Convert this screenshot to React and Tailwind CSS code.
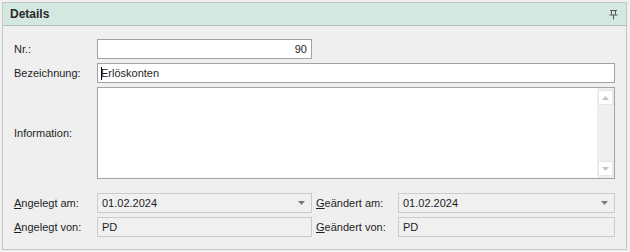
const Label = ({ children, className = '' }) => (
  <div className={`flex items-center text-[11px] text-[#1e1e1e] ${className}`}>{children}</div>
);

const ComboBox = ({ value }) => (
  <div className="flex h-[20px] items-center justify-between border border-[#cbcbcb] bg-[#f0f0f0] pl-[4px] pr-[6px] text-[11px] text-[#1e1e1e]">
    <span>{value}</span>
    <svg width="7" height="4" viewBox="0 0 7 4">
      <path d="M0 0h7L3.5 4z" fill="#7a7a7a" />
    </svg>
  </div>
);

const ReadOnlyBox = ({ value }) => (
  <div className="flex h-[20px] items-center border border-[#cbcbcb] bg-[#f0f0f0] px-[4px] text-[11px] text-[#1e1e1e]">
    {value}
  </div>
);

const PinIcon = () => (
  <svg width="9" height="11" viewBox="0 0 9 11">
    <path d="M1 1.5h7M2.5 1.5v4M6.5 1.5v4M0.5 6h8M4.5 6v4.5" stroke="#555" strokeWidth="1" fill="none" />
  </svg>
);

const ScrollButton = ({ up }) => (
  <div className="flex h-[15px] w-[15px] items-center justify-center border border-[#e6e6e6] bg-white">
    <svg width="7" height="4" viewBox="0 0 7 4">
      <path d={up ? 'M0 4h7L3.5 0z' : 'M0 0h7L3.5 4z'} fill="#c4c4c4" />
    </svg>
  </div>
);

export default function App() {
  return (
    <div className="h-[252px] w-[630px] bg-[#f0f0f0] pl-[2px] pr-[3px] pt-[2px] pb-[2px] font-['Liberation_Sans',Arial,sans-serif]">
      <div className="flex h-[248px] flex-col border border-[#c6c6c6] bg-[#efefef]">
        <div className="flex h-[23px] items-center justify-between border-b border-[#bdbdbd] bg-[#d3e8e1] pl-[7px] pr-[8px]">
          <span className="text-[12px] font-bold text-[#2a2a2a]">Details</span>
          <PinIcon />
        </div>

        <div className="flex flex-col pl-[11px] pr-[11px] pt-[13px]">
          <div className="grid grid-cols-[83px_215px_1fr]">
            <Label>Nr.:</Label>
            <div className="flex h-[20px] items-center justify-end border border-[#a2a2a2] bg-white pr-[4px] text-[11px] text-[#1e1e1e]">
              90
            </div>
          </div>

          <div className="mt-[4px] grid grid-cols-[83px_1fr]">
            <Label>Bezeichnung:</Label>
            <div className="flex h-[20px] items-center border border-[#a2a2a2] bg-white pl-[3px] text-[11px] text-[#1e1e1e]">
              <span className="mr-[-1px] h-[13px] w-[1px] bg-black" />
              Erlöskonten
            </div>
          </div>

          <div className="mt-[4px] grid grid-cols-[83px_1fr]">
            <Label>Information:</Label>
            <div className="flex h-[92px] justify-end border border-[#a2a2a2] bg-white">
              <div className="flex w-[17px] flex-col justify-between bg-[#efefef] px-[1px] py-[2px]">
                <ScrollButton up />
                <ScrollButton />
              </div>
            </div>
          </div>

          <div className="mt-[14px] grid grid-cols-[83px_215px_86px_1fr] gap-y-[4px]">
            <Label><span><span className="underline">A</span>ngelegt am:</span></Label>
            <ComboBox value="01.02.2024" />
            <Label className="pl-[4px]"><span><span className="underline">G</span>eändert am:</span></Label>
            <ComboBox value="01.02.2024" />

            <Label><span><span className="underline">A</span>ngelegt von:</span></Label>
            <ReadOnlyBox value="PD" />
            <Label className="pl-[4px]"><span><span className="underline">G</span>eändert von:</span></Label>
            <ReadOnlyBox value="PD" />
          </div>
        </div>
      </div>
    </div>
  );
}
